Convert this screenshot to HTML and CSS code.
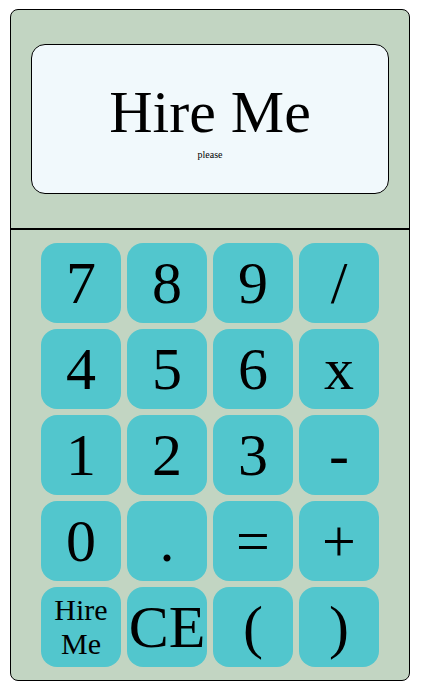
FILE: index.html
```html
<!DOCTYPE html>
<html>
<head>
<meta charset="utf-8">
<link rel="stylesheet" href="styles.css">
</head>
<body>
<div class="calc">
  <div class="top">
    <div class="display">
      <div class="main">Hire Me</div>
      <div class="sub">please</div>
    </div>
  </div>
  <div class="keys">
    <button class="key">7</button>
    <button class="key">8</button>
    <button class="key">9</button>
    <button class="key">/</button>
    <button class="key">4</button>
    <button class="key">5</button>
    <button class="key">6</button>
    <button class="key">x</button>
    <button class="key">1</button>
    <button class="key">2</button>
    <button class="key">3</button>
    <button class="key">-</button>
    <button class="key">0</button>
    <button class="key">.</button>
    <button class="key">=</button>
    <button class="key">+</button>
    <button class="key small">Hire Me</button>
    <button class="key">CE</button>
    <button class="key">(</button>
    <button class="key">)</button>
  </div>
</div>
</body>
</html>
```
FILE: styles.css
```css
html, body {
  margin: 0;
  background: #ffffff;
}
body {
  padding: 9px 0 0 10px;
  font-family: "Liberation Serif", "Times New Roman", serif;
}
.calc {
  width: 398px;
  border: 1px solid #000;
  border-radius: 8px;
  background: #c2d5c2;
  overflow: hidden;
}
.top {
  padding: 34px 20px 34px;
  border-bottom: 2px solid #000;
}
.display {
  height: 148px;
  border: 1px solid #000;
  border-radius: 14px;
  background: #f1f9fc;
  display: flex;
  flex-direction: column;
  align-items: center;
  justify-content: center;
  color: #000;
}
.main {
  font-size: 60px;
  line-height: normal;
}
.sub {
  font-size: 10px;
  line-height: normal;
  margin-top: 2px;
}
.keys {
  padding: 13px 30px;
  display: grid;
  grid-template-columns: repeat(4, 80px);
  grid-auto-rows: 80px;
  gap: 6px;
}
.key {
  margin: 0;
  padding: 0;
  border: none;
  border-radius: 16px;
  background: #52c6cd;
  color: #000;
  font-family: "Liberation Serif", "Times New Roman", serif;
  font-size: 60px;
  line-height: normal;
  display: flex;
  align-items: center;
  justify-content: center;
  text-align: center;
  overflow: visible;
  white-space: nowrap;
}
.key.small {
  font-size: 30px;
  white-space: normal;
  padding: 0 4px;
}
```
